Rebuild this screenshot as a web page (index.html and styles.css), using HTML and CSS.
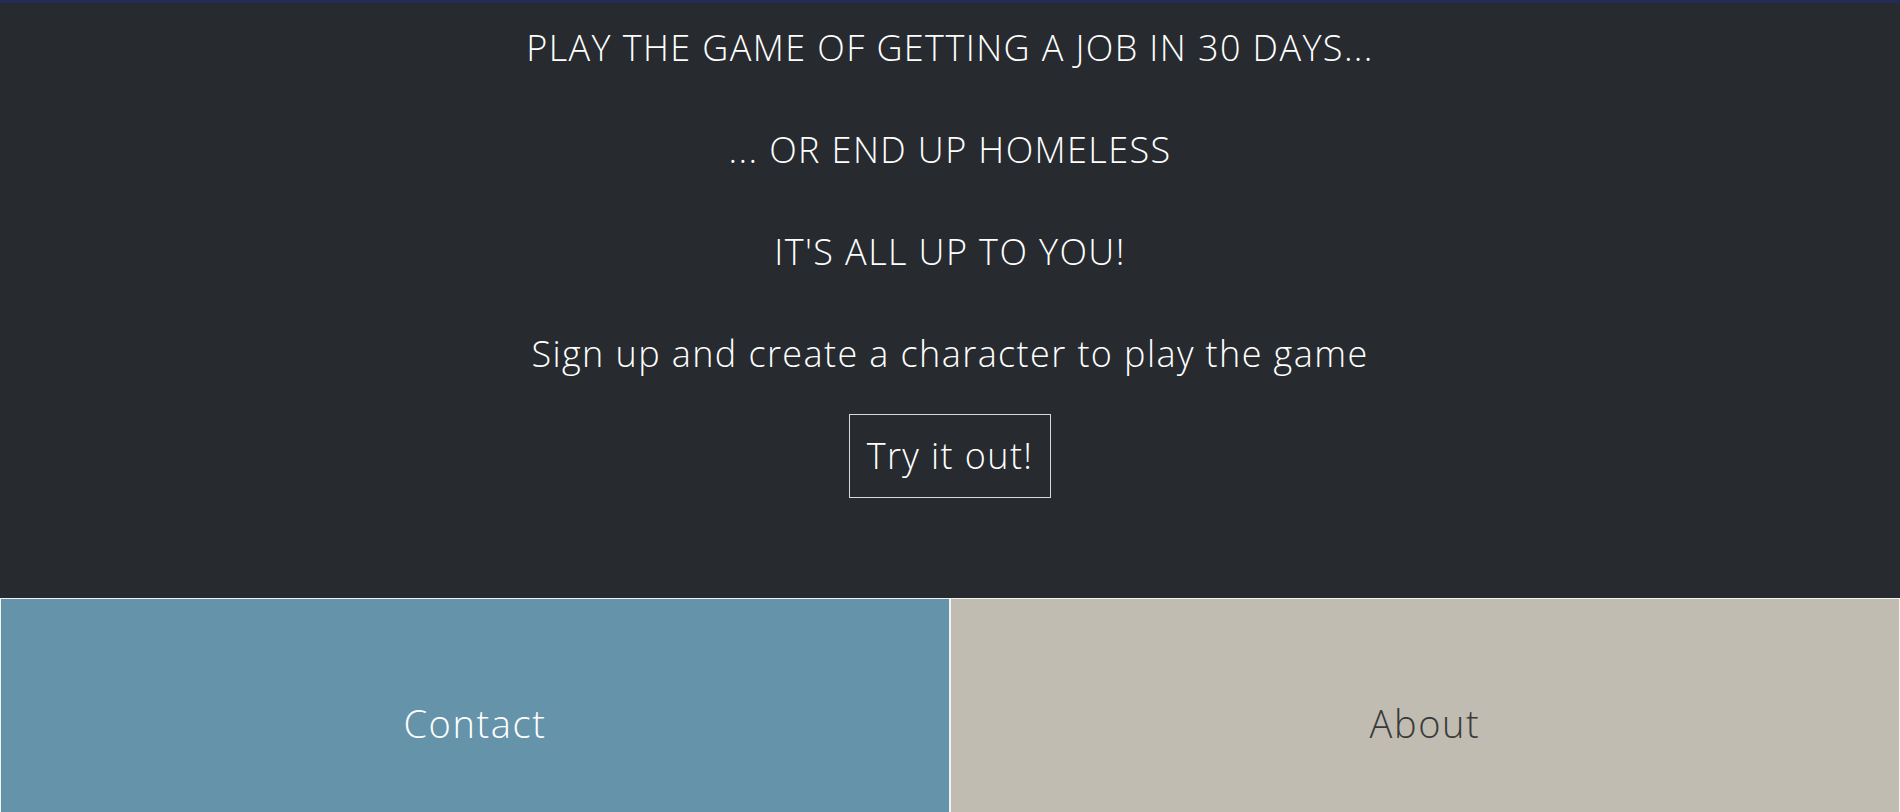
FILE: index.html
```html
<!DOCTYPE html>
<html lang="en">
<head>
<meta charset="utf-8">
<title>Homeless Game</title>
<link rel="stylesheet" href="styles.css">
</head>
<body>
<header class="hero">
  <p class="line">PLAY THE GAME OF GETTING A JOB IN 30 DAYS...</p>
  <p class="line">... OR END UP HOMELESS</p>
  <p class="line">IT'S ALL UP TO YOU!</p>
  <p class="line">Sign up and create a character to play the game</p>
  <a class="try-btn" href="#">Try it out!</a>
</header>
<nav class="panels">
  <a class="panel panel-contact" href="#">Contact</a>
  <a class="panel panel-about" href="#">About</a>
</nav>
</body>
</html>
```

FILE: styles.css
```css
html, body {
  margin: 0;
  padding: 0;
}
body {
  background: #272b30;
  font-family: "Open Sans", "Liberation Sans", sans-serif;
  font-weight: 300;
  color: #ffffff;
  border-top: 3px solid #222c55;
  overflow: hidden;
}
.hero {
  display: flex;
  flex-direction: column;
  align-items: center;
  gap: 42px;
  padding: 15px 0 100px;
}
.line {
  margin: 0;
  height: 60px;
  line-height: 60px;
  font-size: 36px;
  letter-spacing: 1.4px;
  white-space: nowrap;
}
.try-btn {
  margin-top: -12px;
  display: block;
  padding: 21px 17px;
  line-height: 40px;
  font-size: 36px;
  letter-spacing: 1.4px;
  color: #ffffff;
  text-decoration: none;
  border: 1px solid #d8d8d8;
}
.panels {
  display: grid;
  grid-template-columns: 1fr 1fr;
}
.panel {
  height: 250px;
  display: flex;
  align-items: center;
  justify-content: center;
  font-size: 38px;
  letter-spacing: 1.6px;
  text-decoration: none;
  border: 1px solid #f2f2f2;
  box-sizing: border-box;
}
.panel-contact {
  background: #6594aa;
  color: #ffffff;
}
.panel-about {
  background: #c0bcb1;
  color: #3a3a3a;
}
```
